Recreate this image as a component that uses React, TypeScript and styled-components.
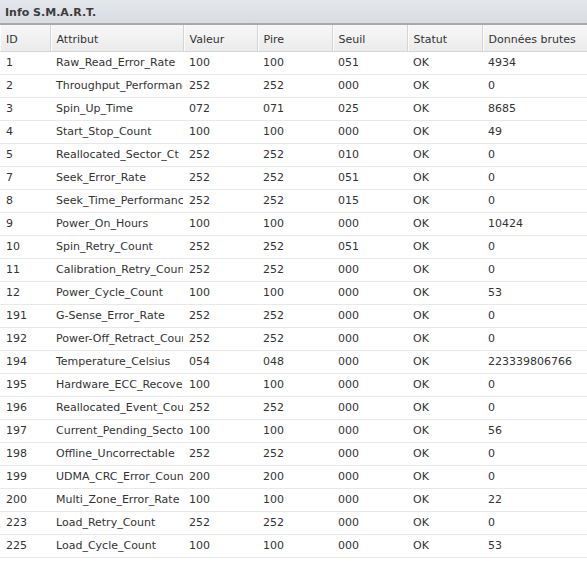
import React from "react";
import styled, { createGlobalStyle } from "styled-components";

const Global = createGlobalStyle`
  html, body { margin: 0; padding: 0; background: #fff; }
  body { font-family: Verdana, "DejaVu Sans", sans-serif; }
`;

const Panel = styled.div`
  width: 587px;
  font-family: Verdana, "DejaVu Sans", sans-serif;
  font-size: 11px;
  color: #333;
`;

const TitleBar = styled.div`
  height: 25px;
  box-sizing: border-box;
  padding: 1px 0 0 5px;
  display: flex;
  align-items: center;
  background: linear-gradient(#e4e7eb, #d9dde2);
  border-bottom: 2px solid #a6a8ab;
  font-weight: bold;
  font-size: 11px;
  color: #3c3c3c;
`;

const Table = styled.table`
  width: 587px;
  border-collapse: collapse;
  table-layout: fixed;
`;

const HeadCell = styled.th`
  height: 26px;
  box-sizing: border-box;
  padding: 3px 0 0 6px;
  text-align: left;
  font-weight: normal;
  background: linear-gradient(#f7f7f7, #ebebeb);
  border-bottom: 1px solid #d6d6d6;
  border-right: 1px solid #d4d4d4;
  box-shadow: inset 1px 0 0 #fcfcfc;
  white-space: nowrap;
  overflow: hidden;
  &:last-child { border-right: none; }
`;

const Cell = styled.td`
  height: 23px;
  box-sizing: border-box;
  padding: 0 0 0 6px;
  border-bottom: 1px solid #e9e9e9;
  white-space: nowrap;
  overflow: hidden;
`;

const cols = [50, 133, 74, 75, 75, 75, 105];
const headers = ["ID", "Attribut", "Valeur", "Pire", "Seuil", "Statut", "Données brutes"];

const rows: string[][] = [
  ["1", "Raw_Read_Error_Rate", "100", "100", "051", "OK", "4934"],
  ["2", "Throughput_Performance", "252", "252", "000", "OK", "0"],
  ["3", "Spin_Up_Time", "072", "071", "025", "OK", "8685"],
  ["4", "Start_Stop_Count", "100", "100", "000", "OK", "49"],
  ["5", "Reallocated_Sector_Ct", "252", "252", "010", "OK", "0"],
  ["7", "Seek_Error_Rate", "252", "252", "051", "OK", "0"],
  ["8", "Seek_Time_Performance", "252", "252", "015", "OK", "0"],
  ["9", "Power_On_Hours", "100", "100", "000", "OK", "10424"],
  ["10", "Spin_Retry_Count", "252", "252", "051", "OK", "0"],
  ["11", "Calibration_Retry_Count", "252", "252", "000", "OK", "0"],
  ["12", "Power_Cycle_Count", "100", "100", "000", "OK", "53"],
  ["191", "G-Sense_Error_Rate", "252", "252", "000", "OK", "0"],
  ["192", "Power-Off_Retract_Count", "252", "252", "000", "OK", "0"],
  ["194", "Temperature_Celsius", "054", "048", "000", "OK", "223339806766"],
  ["195", "Hardware_ECC_Recovered", "100", "100", "000", "OK", "0"],
  ["196", "Reallocated_Event_Count", "252", "252", "000", "OK", "0"],
  ["197", "Current_Pending_Sector", "100", "100", "000", "OK", "56"],
  ["198", "Offline_Uncorrectable", "252", "252", "000", "OK", "0"],
  ["199", "UDMA_CRC_Error_Count", "200", "200", "000", "OK", "0"],
  ["200", "Multi_Zone_Error_Rate", "100", "100", "000", "OK", "22"],
  ["223", "Load_Retry_Count", "252", "252", "000", "OK", "0"],
  ["225", "Load_Cycle_Count", "100", "100", "000", "OK", "53"],
];

export default function App() {
  return (
    <>
      <Global />
      <Panel>
        <TitleBar>Info S.M.A.R.T.</TitleBar>
        <Table>
          <colgroup>
            {cols.map((w, i) => (
              <col key={i} style={{ width: w }} />
            ))}
          </colgroup>
          <thead>
            <tr>
              {headers.map((h) => (
                <HeadCell key={h}>{h}</HeadCell>
              ))}
            </tr>
          </thead>
          <tbody>
            {rows.map((r) => (
              <tr key={r[0]}>
                {r.map((c, i) => (
                  <Cell key={i}>{c}</Cell>
                ))}
              </tr>
            ))}
          </tbody>
        </Table>
      </Panel>
    </>
  );
}
